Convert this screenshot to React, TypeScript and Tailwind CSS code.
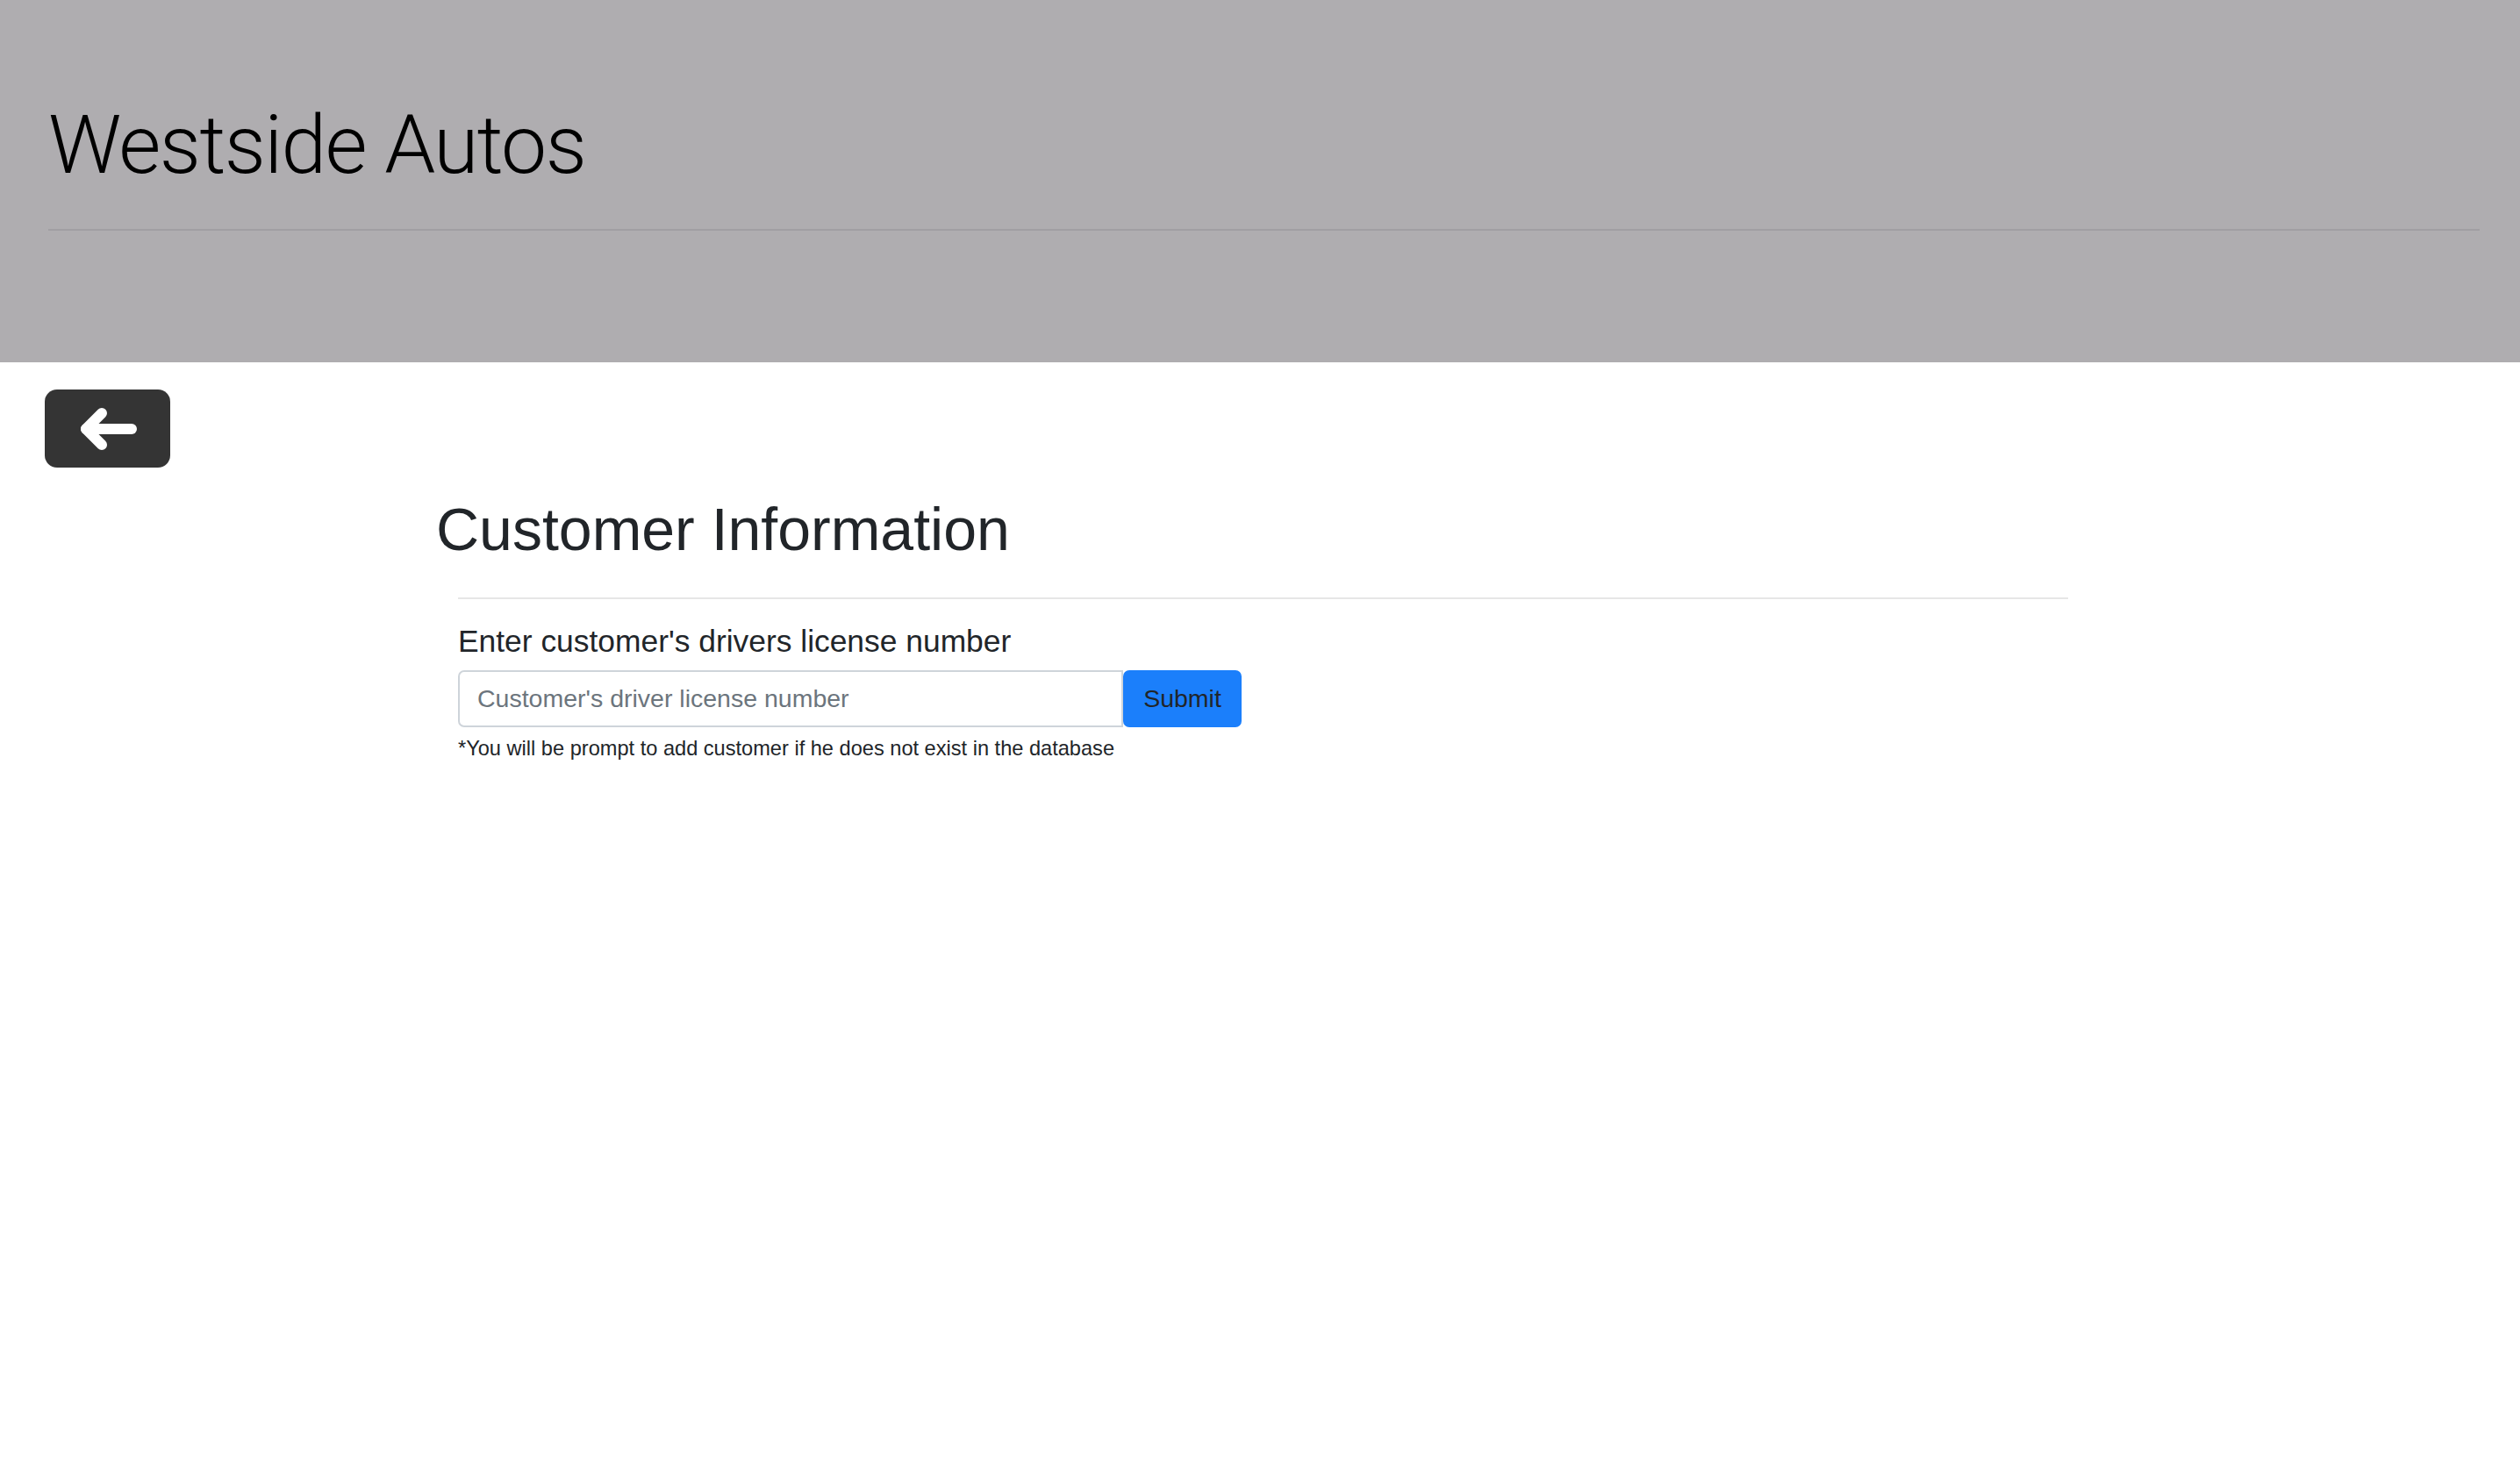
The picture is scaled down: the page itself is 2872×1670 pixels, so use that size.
import React from 'react';

export default function App() {
  return (
    <div className="min-h-screen bg-white font-['Liberation_Sans',Arial,sans-serif] text-[#212529]">

      {/* Jumbotron header */}
      <header className="h-[413px] bg-[#afadb0] pt-[110px] pl-[55px] pr-[46px]">
        <h1 className="font-['Roboto',sans-serif] text-[93px] font-light leading-[1.2] tracking-[-1.6px] text-black">Westside Autos</h1>
        <hr className="mt-[39px] h-[2px] border-0 bg-[#a09ea2]" />
      </header>

      {/* Back button */}
      <div className="pl-[51px] pt-[31px]">
        <button className="flex h-[89px] w-[143px] items-center justify-center rounded-[14px] bg-[#343434]">
          <svg width="66" height="50" viewBox="0 0 66 50" fill="none" stroke="white" strokeWidth="12" strokeLinecap="round" strokeLinejoin="round">
            <path d="M60 25H8" />
            <path d="M26 7L8 25L26 43" />
          </svg>
        </button>
      </div>

      {/* Customer lookup */}
      <main className="ml-[497px] mt-[30px] w-[1860px]">
        <h1 className="text-[68px] font-medium leading-[1.2]">Customer Information</h1>
        <div className="pl-[25px]">
          <hr className="mt-[36px] h-[2px] border-0 bg-[#e6e6e6]" />
          <label className="mt-[27px] block text-[35.4px] font-medium leading-[1.2]">Enter customer's drivers license number</label>
          <div className="mt-[12px] flex h-[65px]">
            <input
              type="text"
              placeholder="Customer's driver license number"
              className="w-[758px] rounded-l-[7px] border-2 border-[#ced4da] bg-white px-[20px] text-[28.5px] placeholder:text-[#6c757d] focus:outline-none"
            />
            <button className="w-[135px] rounded-[7px] bg-[#1b7ffb] text-[28.5px] text-[#212529]">Submit</button>
          </div>
          <p className="mt-[10px] text-[23.6px] leading-[1.2]">*You will be prompt to add customer if he does not exist in the database</p>
        </div>
      </main>

    </div>
  );
}
